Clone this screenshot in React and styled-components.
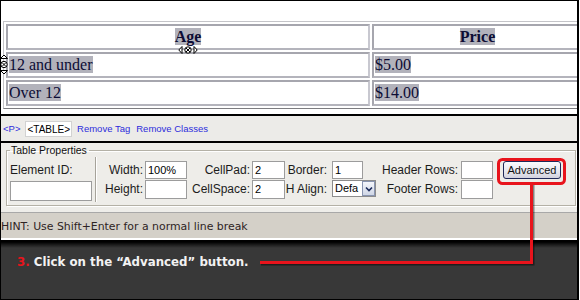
import React from 'react'
import styled, { createGlobalStyle } from 'styled-components'

const GlobalStyle = createGlobalStyle`
  html, body { margin: 0; padding: 0; background: #fff; }
  body { width: 580px; height: 300px; overflow: hidden; }
`

const Frame = styled.div`
  position: relative;
  width: 579px;
  height: 300px;
  box-sizing: border-box;
  border-top: 1px solid #000;
  border-left: 1px solid #000;
  border-right: 2px solid #000;
  border-bottom: 1px solid #000;
  display: flex;
  flex-direction: column;
  overflow: hidden;
  font-family: "Liberation Sans", Arial, sans-serif;
`

const EditArea = styled.div`
  position: relative;
  height: 115px;
  flex-shrink: 0;
  background: #fff;
  padding: 20px 0 0 2px;
  box-sizing: border-box;
  border-bottom: 2px solid #000;
`

const Table = styled.table`
  border-collapse: separate;
  border-spacing: 2px;
  border: 1px solid;
  border-color: #c4c4c8 #7c7c80 #7c7c80 #c4c4c8;
  table-layout: fixed;
  width: 583px;
  font-family: "Liberation Serif", "Times New Roman", serif;
  font-size: 16px;
  color: #0c0c34;
`

const Cell = styled.td`
  box-sizing: border-box;
  height: 26px;
  padding: 0 1px;
  border: 2px solid;
  border-color: #a6a6ae #c8c8d0 #b4b4bc #a6a6ae;
  text-align: ${p => (p.$head ? 'center' : 'left')};
  font-weight: ${p => (p.$head ? 'bold' : 'normal')};
  vertical-align: middle;
  line-height: 18px;
  white-space: nowrap;
`

const Sel = styled.span`
  background: #b2b2bb;
`

const Handle = styled.svg`
  position: absolute;
  left: ${p => p.$x}px;
  top: ${p => p.$y}px;
`

const TagBar = styled.div`
  height: 25px;
  flex-shrink: 0;
  background: #ecebe8;
  border-bottom: 2px solid #000;
  display: flex;
  align-items: center;
  padding-left: 2px;
  font-size: 9.5px;
`

const TagLink = styled.span`
  color: #2c2cdc;
  margin-right: ${p => p.$mr || 6}px;
`

const TagBox = styled.span`
  background: #fff;
  border: 1px solid #d2d2d2;
  color: #000;
  font-size: 10px;
  padding: 2px 1px 1px;
  margin-right: 5px;
  line-height: 11px;
`

const Panel = styled.div`
  height: 70px;
  flex-shrink: 0;
  box-sizing: border-box;
  background: #eeede9;
  border-bottom: 1px solid #a8a8a8;
  padding: 0 1px 0 5px;
`

const Group = styled.fieldset`
  margin: 1px 0 0 0;
  padding: 0 0 0 3px;
  height: 62px;
  box-sizing: border-box;
  border: 1px solid #b4b1a6;
  box-shadow: inset 1px 1px 0 #fff, 1px 1px 0 #fff;
  min-width: 0;
`

const Legend = styled.legend`
  font-size: 10.5px;
  color: #111;
  padding: 0 2px 0 1px;
  margin-left: 0;
  line-height: 13px;
`

const Grid = styled.div`
  display: grid;
  grid-template-columns: 84px 4px 47px 42px 65px 33px 47px 45px 84px 32px 72px;
  grid-template-rows: 18px 19px;
  row-gap: 1px;
  margin-top: 4px;
  font-size: 12px;
  color: #1c1c1c;
`

const Label = styled.div`
  text-align: ${p => (p.$left ? 'left' : 'right')};
  padding-right: ${p => p.$pad || 2}px;
  line-height: 18px;
  white-space: nowrap;
`

const Divider = styled.div`
  grid-row: 1 / span 2;
  grid-column: 2;
  margin: -4px 0 -3px 1px;
  width: 0;
  border-left: 1px solid #a6a39a;
  border-right: 1px solid #fff;
`

const Input = styled.div`
  width: ${p => p.$w}px;
  height: ${p => p.$h || 18}px;
  box-sizing: border-box;
  background: #fff;
  border: 1px solid #9c9c9c;
  font-size: 11px;
  line-height: 16px;
  padding-left: 2px;
  color: #000;
  align-self: start;
`

const SelectBox = styled.div`
  width: 44px;
  height: 17px;
  box-sizing: border-box;
  background: #fff;
  border: 1px solid #8c8c8c;
  display: flex;
  font-size: 11px;
  line-height: 15px;
  color: #000;
`

const SelectText = styled.span`
  flex: 1;
  padding-left: 2px;
`

const SelectArrow = styled.span`
  width: 13px;
  box-sizing: border-box;
  border: 1px solid #8894b0;
  background: linear-gradient(#f4f6fb, #cfd6e6);
  display: flex;
  align-items: center;
  justify-content: center;
`

const Button = styled.div`
  margin-left: 10px;
  width: 58px;
  height: 18px;
  box-sizing: border-box;
  border: 1px solid #1f2858;
  border-radius: 3px;
  background: linear-gradient(#fbfbfd, #e6e6ee 60%, #d2d2de);
  font-size: 11px;
  line-height: 16px;
  text-align: center;
  color: #111;
`

const HintBar = styled.div`
  height: 27px;
  flex-shrink: 0;
  box-sizing: border-box;
  background: #d4d0c8;
  border-bottom: 2px solid #fff;
  font-family: "DejaVu Sans", Verdana, sans-serif;
  font-size: 10.9px;
  color: #2e2424;
  padding-top: 3px;
  line-height: 22px;
  white-space: nowrap;
`

const Caption = styled.div`
  flex: 1;
  background: linear-gradient(#000 0, #1e1e1e 3px, #383838 6px, #383838);
  border-top: 2px solid #000;
  padding: 13px 0 0 16px;
  font-family: "DejaVu Sans", Verdana, sans-serif;
  font-weight: bold;
  font-size: 11.8px;
  color: #f2f2f2;
  white-space: nowrap;
`

const Step = styled.span`
  color: #e8141c;
`

const Overlay = styled.svg`
  position: absolute;
  left: -1px;
  top: -1px;
  pointer-events: none;
`

const HArrows = () => (
  <Handle $x={177} $y={45} width="20" height="8" viewBox="0 0 20 8">
    <path d="M4 0.5 L0.8 4 L4 7.5 Z" fill="#fff" stroke="#000" strokeWidth="1" />
    <circle cx="10" cy="4" r="3.2" fill="#fff" stroke="#000" strokeWidth="1" />
    <path d="M8 2 L12 6 M12 2 L8 6" stroke="#000" strokeWidth="1" />
    <path d="M16 0.5 L19.2 4 L16 7.5 Z" fill="#fff" stroke="#000" strokeWidth="1" />
  </Handle>
)

const VArrows = () => (
  <Handle $x={-1} $y={53} width="8" height="21" viewBox="0 0 8 21">
    <path d="M0.5 4.5 L4 1 L7.5 4.5 Z" fill="#fff" stroke="#000" strokeWidth="1" />
    <circle cx="4" cy="10.5" r="3.2" fill="#fff" stroke="#000" strokeWidth="1" />
    <path d="M2 8.5 L6 12.5 M6 8.5 L2 12.5" stroke="#000" strokeWidth="1" />
    <path d="M0.5 16.5 L4 20 L7.5 16.5 Z" fill="#fff" stroke="#000" strokeWidth="1" />
  </Handle>
)

const Chevron = () => (
  <svg width="8" height="6" viewBox="0 0 8 6">
    <path d="M1 1.5 L4 4.5 L7 1.5" fill="none" stroke="#1a2a5a" strokeWidth="1.6" />
  </svg>
)

const rows = [
  ['12 and under', '$5.00'],
  ['Over 12', '$14.00'],
]

const App = () => {
  return (
    <Frame>
      <GlobalStyle />
      <EditArea>
        <Table>
          <tbody>
            <tr>
              <Cell $head style={{ width: 364 }}><Sel>Age</Sel></Cell>
              <Cell $head><Sel>Price</Sel></Cell>
            </tr>
            {rows.map(r => (
              <tr key={r[0]}>
                <Cell><Sel>{r[0]}</Sel></Cell>
                <Cell><Sel>{r[1]}</Sel></Cell>
              </tr>
            ))}
          </tbody>
        </Table>
        <HArrows />
        <VArrows />
      </EditArea>

      <TagBar>
        <TagLink $mr={5}>&lt;P&gt;</TagLink>
        <TagBox>&lt;TABLE&gt;</TagBox>
        <TagLink>Remove Tag</TagLink>
        <TagLink>Remove Classes</TagLink>
      </TagBar>

      <Panel>
        <Group>
          <Legend>Table Properties</Legend>
          <Grid>
            <Label $left>Element ID:</Label>
            <Divider />
            <Label>Width:</Label>
            <Input $w={42}>100%</Input>
            <Label>CellPad:</Label>
            <Input $w={33}>2</Input>
            <Label $pad={5}>Border:</Label>
            <Input $w={31}>1</Input>
            <Label $pad={3}>Header Rows:</Label>
            <Input $w={32} />
            <Button>Advanced</Button>

            <Input $w={82} $h={20} style={{ marginTop: 1 }} />
            <Label style={{ gridColumn: 3 }}>Height:</Label>
            <Input $w={42} $h={19} />
            <Label>CellSpace:</Label>
            <Input $w={33} $h={19}>2</Input>
            <Label $pad={5}>H Align:</Label>
            <SelectBox>
              <SelectText>Defa</SelectText>
              <SelectArrow><Chevron /></SelectArrow>
            </SelectBox>
            <Label $pad={3}>Footer Rows:</Label>
            <Input $w={32} $h={19} />
          </Grid>
        </Group>
      </Panel>

      <HintBar>HINT: Use Shift+Enter for a normal line break</HintBar>

      <Caption>
        <Step>3.</Step> Click on the “Advanced” button.
      </Caption>

      <Overlay width="580" height="300" viewBox="0 0 580 300">
        <path d="M533 185 V264 H261" fill="none" stroke="#000" strokeOpacity="0.45" strokeWidth="3" />
        <path d="M531.5 184 V262.5 H260" fill="none" stroke="#e8141c" strokeWidth="3" />
        <rect x="498.5" y="159.5" width="66" height="24" rx="4" fill="none" stroke="#e8141c" strokeWidth="3" />
      </Overlay>
    </Frame>
  )
}

export default App
